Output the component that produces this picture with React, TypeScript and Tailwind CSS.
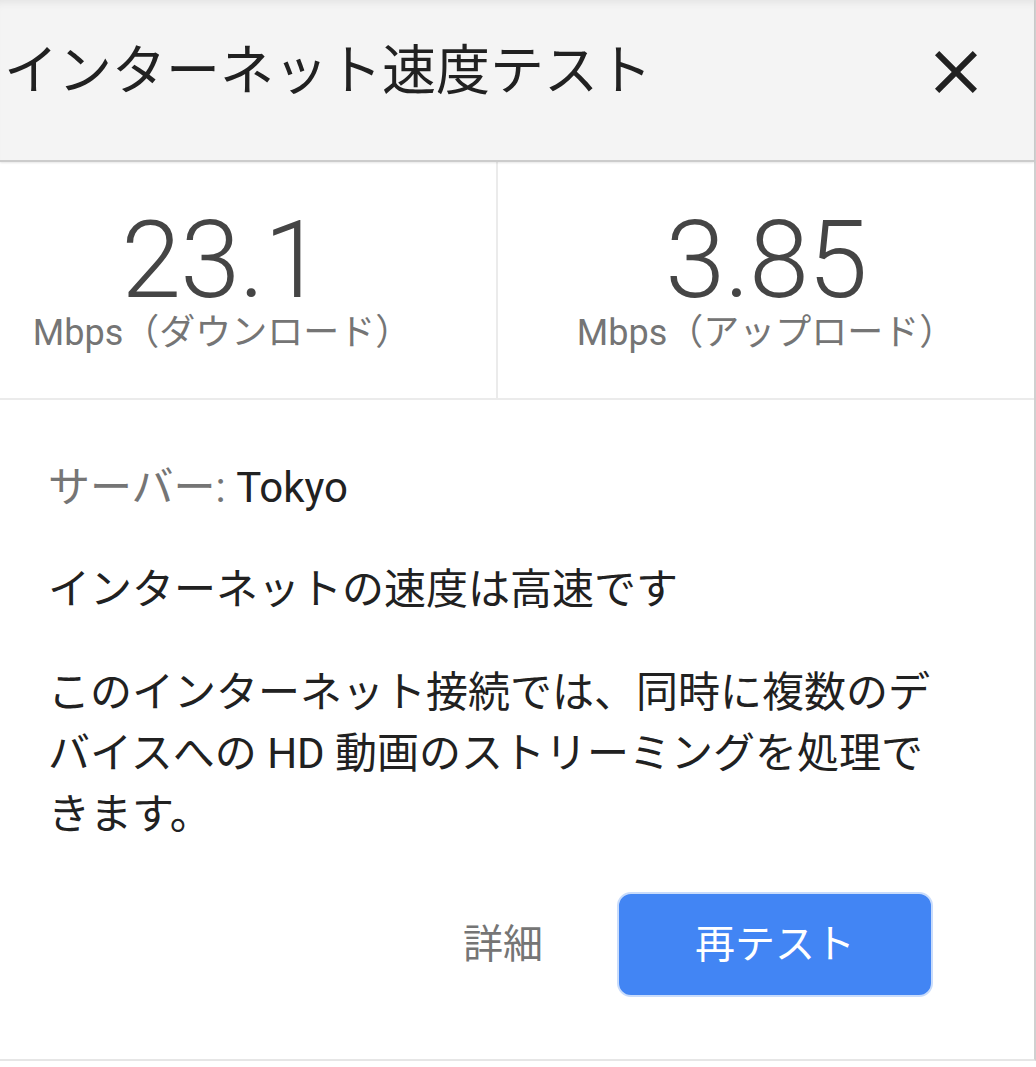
import clsx from "clsx";

interface StatProps {
    value: string;
    label: string;
    className?: string;
}

function CloseIcon() {
    return (
        <svg viewBox="0 0 24 24" className="h-[72px] w-[72px] fill-[#212121]">
            <path d="M19 6.41 17.59 5 12 10.59 6.41 5 5 6.41 10.59 12 5 17.59 6.41 19 12 13.41 17.59 19 19 17.59 13.41 12z" />
        </svg>
    );
}

function Stat({ value, label, className }: StatProps) {
    return (
        <div className={clsx("flex flex-col items-center pt-[46px]", className)}>
            <div className="text-[108px] font-light leading-[104px] tracking-[-1px] text-[#454545]">{value}</div>
            <div className="text-[36px] leading-[42px] text-[#757575]">{label}</div>
        </div>
    );
}

export default function App() {
    return (
        <div className="min-h-screen bg-white font-['Roboto','Noto_Sans_CJK_JP',sans-serif]">
            <div className="border-r-2 border-b-2 border-r-[#d0d0d0] border-b-[#e6e6e6]">
                <header className="relative z-10 flex h-[162px] items-center justify-between border-b-2 border-[#cccccc] bg-[#f4f4f4] pb-[16px] pl-[4px] pr-[42px] shadow-[inset_0_8px_8px_-6px_rgba(0,0,0,0.08),0_1px_2px_rgba(0,0,0,0.1)]">
                    <h1 className="text-[54px] leading-[64px] text-[#212121]">インターネット速度テスト</h1>
                    <button type="button" aria-label="閉じる">
                        <CloseIcon />
                    </button>
                </header>

                <div className="grid h-[238px] grid-cols-[498px_1fr] border-b-2 border-[#ebebeb]">
                    <Stat value="23.1" label="Mbps（ダウンロード）" className="border-r-2 border-[#ebebeb] pr-[52px]" />
                    <Stat value="3.85" label="Mbps（アップロード）" />
                </div>

                <div className="pb-[62px] pl-[48px] pr-[96px] pt-[57px] text-[42px] leading-[61px] text-[#212121]">
                    <p>
                        <span className="text-[#757575]">サーバー:</span> Tokyo
                    </p>
                    <p className="mt-[41px]">インターネットの速度は高速です</p>
                    <p className="mt-[42px]">
                        このインターネット接続では、同時に複数のデバイスへの HD 動画のストリーミングを処理できます。
                    </p>

                    <div className="mr-[5px] mt-[47px] flex items-center justify-end gap-[74px]">
                        <button type="button" className="text-[40px] text-[#757575]">
                            詳細
                        </button>
                        <button
                            type="button"
                            className="h-[105px] w-[316px] rounded-[14px] border-2 border-[#c9dcfb] bg-[#4285f4] text-[40px] text-white"
                        >
                            再テスト
                        </button>
                    </div>
                </div>
            </div>
        </div>
    );
}
